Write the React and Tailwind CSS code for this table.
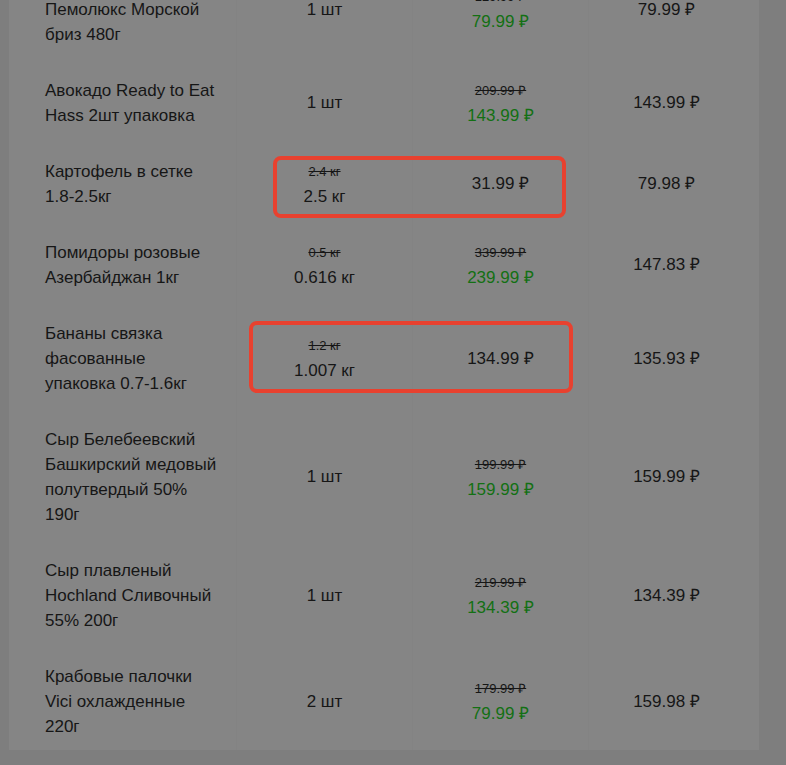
import React from "react";

const rows = [
  { name: ["Чистящее средство", "Пемолюкс Морской", "бриз 480г"], qty: { main: "1 шт" }, price: { old: "129.99 ₽", now: "79.99 ₽" }, total: "79.99 ₽" },
  { name: ["Авокадо Ready to Eat", "Hass 2шт упаковка"], qty: { main: "1 шт" }, price: { old: "209.99 ₽", now: "143.99 ₽" }, total: "143.99 ₽" },
  { name: ["Картофель в сетке", "1.8-2.5кг"], qty: { old: "2.4 кг", main: "2.5 кг" }, price: { plain: "31.99 ₽" }, total: "79.98 ₽" },
  { name: ["Помидоры розовые", "Азербайджан 1кг"], qty: { old: "0.5 кг", main: "0.616 кг" }, price: { old: "339.99 ₽", now: "239.99 ₽" }, total: "147.83 ₽" },
  { name: ["Бананы связка", "фасованные", "упаковка 0.7-1.6кг"], qty: { old: "1.2 кг", main: "1.007 кг" }, price: { plain: "134.99 ₽" }, total: "135.93 ₽" },
  { name: ["Сыр Белебеевский", "Башкирский медовый", "полутвердый 50%", "190г"], qty: { main: "1 шт" }, price: { old: "199.99 ₽", now: "159.99 ₽" }, total: "159.99 ₽" },
  { name: ["Сыр плавленый", "Hochland Сливочный", "55% 200г"], qty: { main: "1 шт" }, price: { old: "219.99 ₽", now: "134.39 ₽" }, total: "134.39 ₽" },
  { name: ["Крабовые палочки", "Vici охлажденные", "220г"], qty: { main: "2 шт" }, price: { old: "179.99 ₽", now: "79.99 ₽" }, total: "159.98 ₽" },
];

function Small({ children }) {
  return <div className="text-[13px] leading-[25px] line-through">{children}</div>;
}

export default function App() {
  return (
    <div
      className="relative w-[786px] h-[765px] overflow-hidden bg-[#7e7e7e] text-[#161616]"
      style={{ fontFamily: '"Liberation Sans", Arial, sans-serif' }}
    >
      <div className="ml-[9px] w-[750px] h-[750px] overflow-hidden bg-[#858585]">
        <div className="-mt-[44px] flex flex-col">
          {rows.map((r, i) => (
            <div key={i} className="flex text-[17px] leading-[25px]">
              <div className="w-[227px] shrink-0 pl-[36px] pr-[10px] py-[15.5px]">
                {r.name.map((l, j) => (
                  <div key={j} className="whitespace-nowrap">{l}</div>
                ))}
              </div>
              <div className="w-[176px] shrink-0 border-l border-[#838383] flex flex-col items-center justify-center">
                {r.qty.old && <Small>{r.qty.old}</Small>}
                <div>{r.qty.main}</div>
              </div>
              <div className="w-[176px] shrink-0 border-l border-[#838383] flex flex-col items-center justify-center">
                {r.price.plain ? (
                  <div>{r.price.plain}</div>
                ) : (
                  <>
                    <Small>{r.price.old}</Small>
                    <div className="text-[#137013]">{r.price.now}</div>
                  </>
                )}
              </div>
              <div className="w-[156px] shrink-0 border-l border-[#838383] flex items-center justify-center">
                {r.total}
              </div>
            </div>
          ))}
        </div>
      </div>

      <div className="absolute left-[273px] top-[156px] w-[293px] h-[62px] rounded-[8px] border-[4px] border-[#e8412f]" />
      <div className="absolute left-[249px] top-[321px] w-[324px] h-[72px] rounded-[8px] border-[4px] border-[#e8412f]" />
    </div>
  );
}
